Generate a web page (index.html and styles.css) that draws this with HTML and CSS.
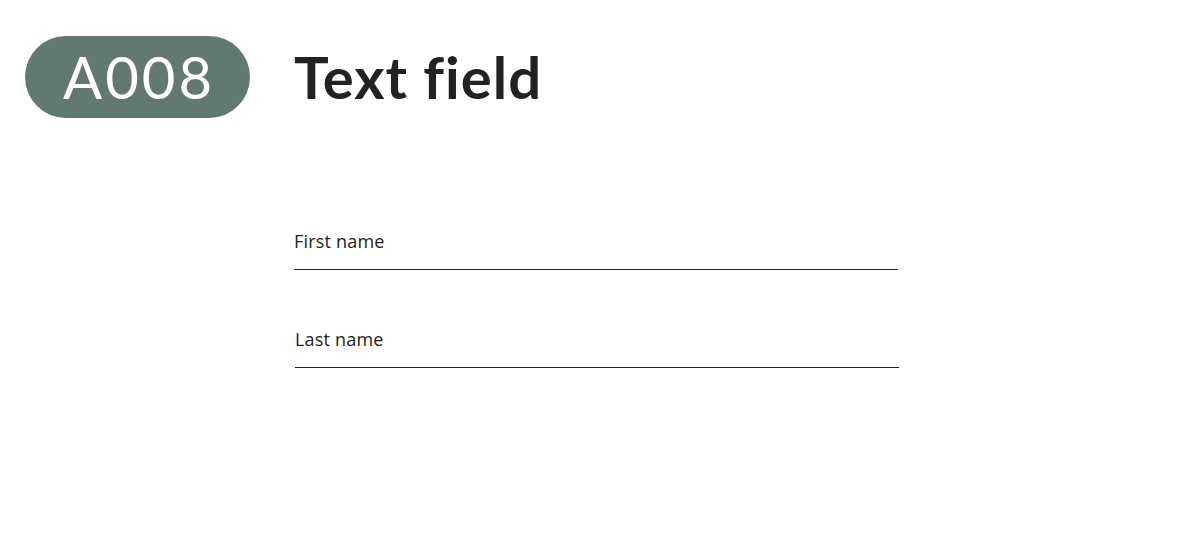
FILE: index.html
```html
<!DOCTYPE html>
<html>
<head>
<meta charset="utf-8">
<link rel="stylesheet" href="styles.css">
</head>
<body>
<div class="page">
  <header class="header">
    <div class="badge">A008</div>
    <h1 class="title">Text field</h1>
  </header>
  <form class="form">
    <label class="field field-first">
      <span class="label">First name</span>
      <span class="line"></span>
    </label>
    <label class="field field-last">
      <span class="label">Last name</span>
      <span class="line"></span>
    </label>
  </form>
</div>
</body>
</html>
```
FILE: styles.css
```css
html, body {
  margin: 0;
  padding: 0;
  background: #ffffff;
}
.page {
  width: 1193px;
  height: 555px;
  font-family: Lato, "Open Sans", sans-serif;
  font-variant-ligatures: none;
  color: #222222;
}
.header {
  display: flex;
  align-items: center;
  padding: 36px 0 0 25px;
  gap: 44px;
}
.badge {
  width: 225px;
  height: 82px;
  border-radius: 41px;
  background: #627872;
  color: #ffffff;
  font-size: 58px;
  font-weight: 400;
  letter-spacing: 3px;
  display: flex;
  align-items: center;
  justify-content: center;
  line-height: 1;
  padding-left: 3px;
  box-sizing: border-box;
}
.title {
  margin: 0;
  font-size: 58px;
  font-weight: 700;
  line-height: 1;
  letter-spacing: 1px;
  color: #222222;
}
.form {
  display: flex;
  flex-direction: column;
  padding: 113px 0 0 294px;
  gap: 59px;
}
.field {
  display: flex;
  flex-direction: column;
  width: 604px;
}
.field-last {
  margin-left: 1px;
}
.label {
  font-family: "Open Sans", sans-serif;
  font-size: 18px;
  line-height: 20px;
  letter-spacing: 0.2px;
  color: #222222;
}
.line {
  display: block;
  margin-top: 18px;
  height: 1px;
  background: #222222;
}
```
